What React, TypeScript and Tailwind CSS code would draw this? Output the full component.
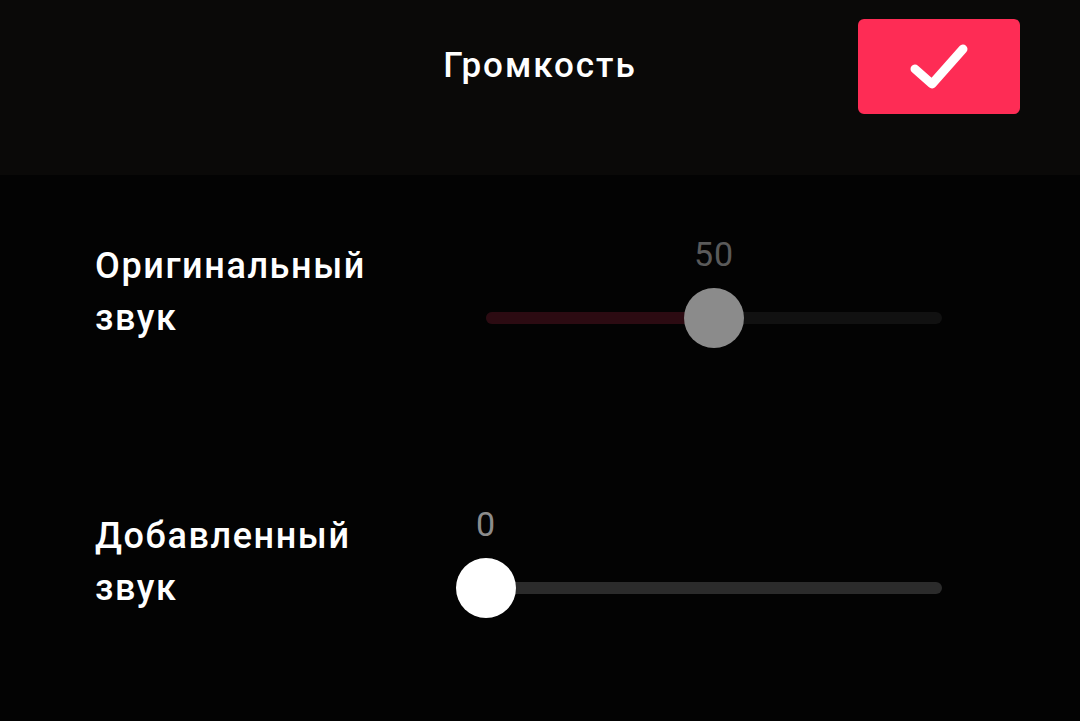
import React from "react";

type SliderProps = {
  value: number;
  filled: string;
  rest: string;
  thumb: string;
  valueColor: string;
};

function Slider({ value, filled, rest, thumb, valueColor }: SliderProps) {
  const pct = value;
  return (
    <div className="w-[456px] flex flex-col">
      <div className="relative h-[32px]">
        <span
          className={`absolute top-0 -translate-x-1/2 text-[34px] leading-[32px] tracking-[1px] ${valueColor}`}
          style={{ left: `${pct}%` }}
        >
          {value}
        </span>
      </div>
      <div className="relative h-[60px] mt-[18px] flex items-center">
        <div className={`w-full h-[12px] rounded-full flex overflow-hidden ${rest}`}>
          <div className={`h-full ${filled}`} style={{ width: `${pct}%` }} />
        </div>
        <div
          className={`absolute top-0 w-[60px] h-[60px] rounded-full -translate-x-1/2 ${thumb}`}
          style={{ left: `${pct}%` }}
        />
      </div>
    </div>
  );
}

export default function App() {
  return (
    <div
      className="w-[1080px] h-[721px] bg-[#030303] overflow-hidden text-white"
      style={{ fontFamily: "Roboto, 'Noto Sans', sans-serif" }}
    >
      <header className="h-[175px] bg-[#0a0908] grid grid-cols-[1fr_auto_1fr] items-start pt-[19px]">
        <div />
        <h1 className="h-[95px] flex items-center text-[35px] tracking-[2px] font-medium">Громкость</h1>
        <div className="flex justify-end pr-[60px]">
          <button className="w-[162px] h-[95px] rounded-[6px] bg-[#fe2c55] flex items-center justify-center">
            <svg width="64" height="50" viewBox="0 0 64 50" fill="none">
              <path
                d="M8 27 L25 42 L56 7"
                stroke="white"
                strokeWidth="9"
                strokeLinecap="round"
                strokeLinejoin="round"
              />
            </svg>
          </button>
        </div>
      </header>
      <main className="pl-[95px] pt-[63px] flex flex-col gap-[160px]">
        <div className="flex items-start">
          <div className="w-[391px] pt-[2px] text-[36px] leading-[52px] tracking-[1.6px] font-medium">
            Оригинальный
            <br />
            звук
          </div>
          <Slider
            value={50}
            filled="bg-[#2c0b12]"
            rest="bg-[#111111]"
            thumb="bg-[#8b8b8b]"
            valueColor="text-[#5a5a5a]"
          />
        </div>
        <div className="flex items-start">
          <div className="w-[391px] pt-[2px] text-[36px] leading-[52px] tracking-[1.6px] font-medium">
            Добавленный
            <br />
            звук
          </div>
          <Slider
            value={0}
            filled="bg-[#2b2b2b]"
            rest="bg-[#2b2b2b]"
            thumb="bg-white"
            valueColor="text-[#8c8c8c]"
          />
        </div>
      </main>
    </div>
  );
}
